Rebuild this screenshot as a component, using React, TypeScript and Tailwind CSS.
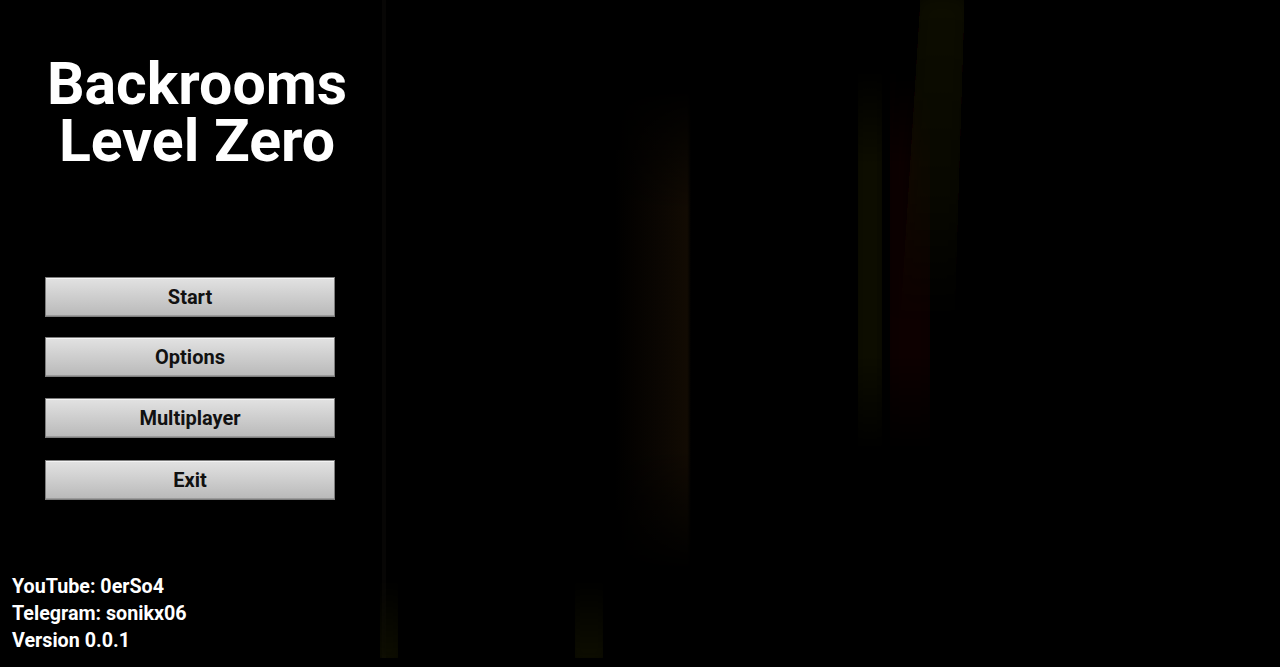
import React from "react";

function Background() {
  return (
    <svg
      className="absolute inset-0 h-full w-full"
      viewBox="0 0 900 658"
      preserveAspectRatio="none"
    >
      <defs>
        <linearGradient id="hA" x1="0" x2="1" y1="0" y2="0">
          <stop offset="0" stopColor="#110a03" stopOpacity="0" />
          <stop offset="0.55" stopColor="#110a03" stopOpacity="0.6" />
          <stop offset="0.95" stopColor="#120b03" stopOpacity="1" />
          <stop offset="1" stopColor="#120b03" stopOpacity="0" />
        </linearGradient>
        <linearGradient id="vFade" x1="0" x2="0" y1="0" y2="1">
          <stop offset="0" stopColor="#fff" stopOpacity="0" />
          <stop offset="0.25" stopColor="#fff" stopOpacity="1" />
          <stop offset="0.75" stopColor="#fff" stopOpacity="1" />
          <stop offset="1" stopColor="#fff" stopOpacity="0" />
        </linearGradient>
        <linearGradient id="vTop" x1="0" x2="0" y1="0" y2="1">
          <stop offset="0" stopColor="#fff" stopOpacity="1" />
          <stop offset="0.6" stopColor="#fff" stopOpacity="0.6" />
          <stop offset="1" stopColor="#fff" stopOpacity="0" />
        </linearGradient>
        <linearGradient id="vBottom" x1="0" x2="0" y1="0" y2="1">
          <stop offset="0" stopColor="#fff" stopOpacity="0" />
          <stop offset="1" stopColor="#fff" stopOpacity="1" />
        </linearGradient>
        <mask id="mA" maskUnits="userSpaceOnUse" x="0" y="0" width="900" height="658">
          <rect x="0" y="90" width="900" height="480" fill="url(#vFade)" />
        </mask>
        <mask id="mB" maskUnits="userSpaceOnUse" x="0" y="0" width="900" height="658">
          <rect x="0" y="70" width="900" height="380" fill="url(#vFade)" />
        </mask>
        <mask id="mC" maskUnits="userSpaceOnUse" x="0" y="0" width="900" height="658">
          <rect x="0" y="0" width="900" height="320" fill="url(#vTop)" />
        </mask>
        <mask id="mD" maskUnits="userSpaceOnUse" x="0" y="0" width="900" height="658">
          <rect x="0" y="580" width="900" height="78" fill="url(#vBottom)" />
        </mask>
        <filter id="soft" x="-50%" y="-10%" width="200%" height="120%">
          <feGaussianBlur stdDeviation="4" />
        </filter>
        <filter id="softer" x="-50%" y="-10%" width="200%" height="120%">
          <feGaussianBlur stdDeviation="8" />
        </filter>
      </defs>
      <rect x="2" y="0" width="4" height="658" fill="#070605" />
      <g mask="url(#mA)">
        <rect x="120" y="0" width="40" height="658" fill="#060402" filter="url(#softer)" />
        <rect x="235" y="0" width="76" height="658" fill="url(#hA)" />
      </g>
      <g mask="url(#mB)">
        <rect x="478" y="0" width="24" height="658" fill="#0e0803" filter="url(#soft)" />
        <rect x="510" y="0" width="40" height="658" fill="#070503" filter="url(#softer)" />
      </g>
      <g mask="url(#mC)">
        <path d="M540 0 L585 0 L575 320 L520 320 Z" fill="#090704" filter="url(#softer)" />
      </g>
      <g mask="url(#mD)">
        <rect x="0" y="0" width="18" height="658" fill="#0e0b06" filter="url(#soft)" />
        <rect x="195" y="0" width="28" height="658" fill="#0c0905" filter="url(#soft)" />
      </g>
    </svg>
  );
}

function MenuButton({ label, className }: { label: string; className: string }) {
  return (
    <button
      className={
        "flex h-[40px] w-[290px] items-center justify-center border border-[#7d7d7d] bg-[linear-gradient(to_bottom,#e2e2e2,#b9b9b9)] text-[20px] font-bold text-[#111] shadow-[inset_0_1px_0_#f4f4f4,inset_0_-1px_0_#9a9a9a] " +
        className
      }
      style={{ fontFamily: "Roboto, 'Liberation Sans', sans-serif" }}
    >
      {label}
    </button>
  );
}

export default function App() {
  return (
    <div
      className="flex h-[667px] w-[1280px] overflow-hidden bg-black text-white"
      style={{ fontFamily: "Roboto, 'Liberation Sans', sans-serif" }}
    >
      <div className="flex w-[380px] shrink-0 flex-col">
        <div className="mt-[55px] pl-[14px] text-center text-[59px] font-bold leading-[57px]">
          <div>Backrooms</div>
          <div>Level Zero</div>
        </div>
        <div className="ml-[45px] flex flex-col">
          <MenuButton label="Start" className="mt-[108px]" />
          <MenuButton label="Options" className="mt-[20px]" />
          <MenuButton label="Multiplayer" className="mt-[21px]" />
          <MenuButton label="Exit" className="mt-[22px]" />
        </div>
        <div className="mt-auto mb-[13px] pl-[12px] text-[19.7px] font-bold leading-[27px]">
          <div>YouTube: 0erSo4</div>
          <div>Telegram: sonikx06</div>
          <div>Version 0.0.1</div>
        </div>
      </div>
      <div className="relative mb-[9px] flex-1">
        <Background />
      </div>
    </div>
  );
}
